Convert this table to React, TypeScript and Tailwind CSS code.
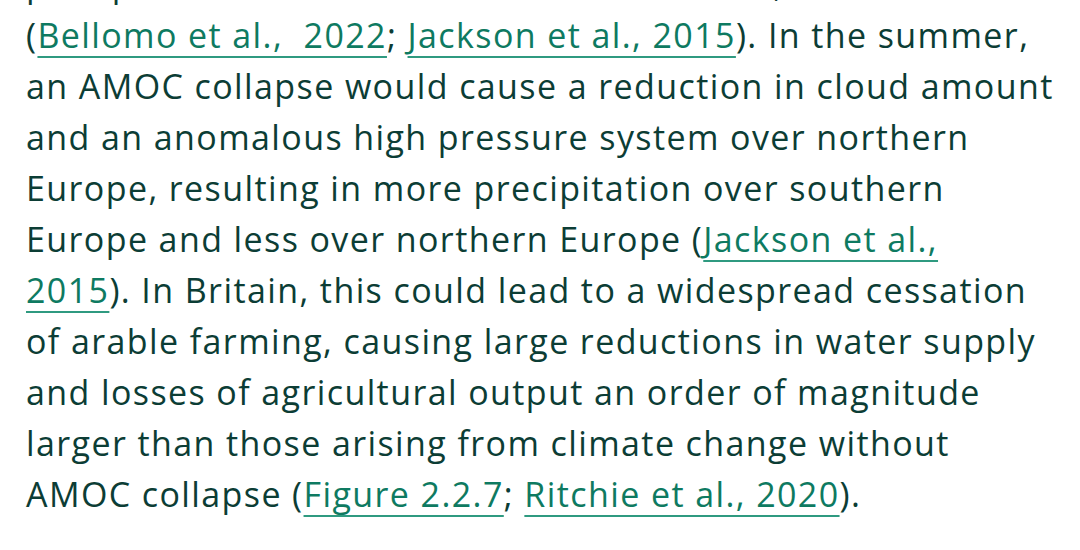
const A = ({ children }: { children: React.ReactNode }) => (
  <a
    href="#"
    className="text-[#0e7a61] underline decoration-[#2f9a80] decoration-2 underline-offset-[8px] [text-decoration-skip-ink:none]"
  >
    {children}
  </a>
);

export default function App() {
  return (
    <div className="h-[550px] w-[1080px] overflow-hidden bg-white">
      <p
        className="-mt-[41px] whitespace-nowrap pl-[26px] text-[34px] leading-[51px] tracking-[1.4px] text-[#0c3d35]"
        style={{ fontFamily: "'Open Sans', Lato, sans-serif" }}
      >
        precipitation would be altered in the winter, while
        <br />
        (<A>Bellomo et al.,&nbsp; 2022</A>; <A>Jackson et al., 2015</A>). In the summer,
        <br />
        an AMOC collapse would cause a reduction in cloud amount
        <br />
        and an anomalous high pressure system over northern
        <br />
        Europe, resulting in more precipitation over southern
        <br />
        Europe and less over northern Europe (<A>Jackson et al.,</A>
        <br />
        <A>2015</A>). In Britain, this could lead to a widespread cessation
        <br />
        of arable farming, causing large reductions in water supply
        <br />
        and losses of agricultural output an order of magnitude
        <br />
        larger than those arising from climate change without
        <br />
        AMOC collapse (<A>Figure 2.2.7</A>; <A>Ritchie et al., 2020</A>).
      </p>
    </div>
  );
}
